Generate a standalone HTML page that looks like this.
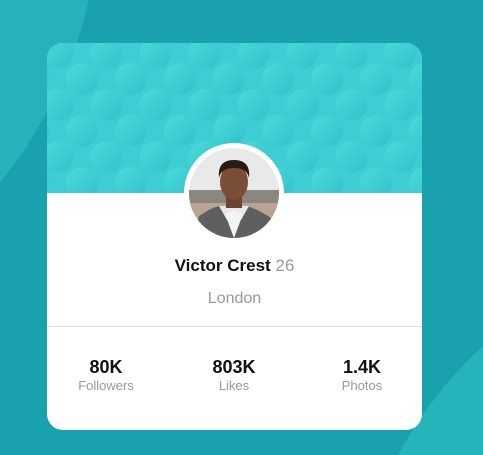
<!DOCTYPE html>
<html><head><meta charset="utf-8"><style>
html,body{margin:0;padding:0;width:483px;height:455px;overflow:hidden}
body{background:#19a1ad;position:relative;font-family:"Liberation Sans",sans-serif}
.wrap{position:absolute;left:0;top:0;width:483px;height:455px;overflow:hidden}
.bg1{position:absolute;left:-800px;top:-550px;width:900px;height:900px;border-radius:50%;background:#25b2b9}
.bg2{position:absolute;left:350px;top:238px;width:820px;height:820px;border-radius:50%;background:#25b4b9}
.card{position:absolute;left:47px;top:43px;width:375px;height:387px;background:#fff;border-radius:16px;overflow:hidden}
.hdr{position:absolute;left:0;top:0;width:375px;height:150px}
.av{position:absolute;left:137px;top:100px;width:100px;height:100px;border-radius:50%;background:#fff}
.av svg{position:absolute;left:5px;top:5px}
.name{position:absolute;left:0;width:375px;top:213px;text-align:center;font-size:17px;font-weight:bold;color:#111}
.name span{font-weight:normal;color:#999}
.loc{position:absolute;left:0;width:375px;top:247px;text-align:center;font-size:16px;color:#999}
.hr{position:absolute;left:0;top:283px;width:375px;height:1px;background:#ddd}
.st{position:absolute;top:313px;width:120px;text-align:center}
.st b{display:block;font-size:18px;color:#111;line-height:22px}
.st i{display:block;font-style:normal;font-size:13px;color:#999;line-height:16px}
</style></head><body>
<div class="wrap"><div class="bg1"></div><div class="bg2"></div>
<div class="card">
<svg class="hdr" width="375" height="150">
<defs>
<linearGradient id="g" x1="0" y1="0" x2="1" y2="1"><stop offset="0" stop-color="#4adcdc"/><stop offset="1" stop-color="#33c0c9"/></linearGradient>
<pattern id="p" x="-14" y="-16" width="49" height="52" patternUnits="userSpaceOnUse">
<circle cx="0" cy="0" r="16" fill="url(#g)"/><circle cx="49" cy="0" r="16" fill="url(#g)"/><circle cx="0" cy="52" r="16" fill="url(#g)"/><circle cx="49" cy="52" r="16" fill="url(#g)"/><circle cx="24.5" cy="26" r="16" fill="url(#g)"/>
</pattern></defs>
<rect width="375" height="150" fill="#3ecdd3"/>
<rect width="375" height="150" fill="url(#p)"/>
</svg>
<div class="av"><svg width="90" height="90" viewBox="0 0 90 90">
<defs><clipPath id="c"><circle cx="45" cy="45" r="45"/></clipPath></defs>
<g clip-path="url(#c)">
<rect width="90" height="90" fill="#e9e9ea"/>
<rect y="42" width="90" height="20" fill="#8a8680"/>
<rect y="55" width="90" height="35" fill="#b8a490"/>
<path d="M5 90 L10 68 Q25 58 32 58 L58 58 Q70 62 82 70 L88 90Z" fill="#5e5f60"/>
<path d="M30 58 L38 72 L45 64 L52 72 L60 58 Z" fill="#e8e8e6"/>
<path d="M36 66 L45 90 L54 66 L45 62Z" fill="#f4f4f4"/>
<rect x="37" y="44" width="16" height="16" fill="#6b4330"/>
<ellipse cx="45" cy="34" rx="14" ry="18" fill="#7a4d36"/>
<path d="M30 30 Q28 12 45 12 Q62 12 60 30 Q58 20 45 20 Q32 20 30 30Z" fill="#2a1a14"/>
</g></svg></div>
<div class="name">Victor Crest <span>26</span></div>
<div class="loc">London</div>
<div class="hr"></div>
<div class="st" style="left:-1px"><b>80K</b><i>Followers</i></div>
<div class="st" style="left:127px"><b>803K</b><i>Likes</i></div>
<div class="st" style="left:255px"><b>1.4K</b><i>Photos</i></div>
</div></div>
</body></html>
